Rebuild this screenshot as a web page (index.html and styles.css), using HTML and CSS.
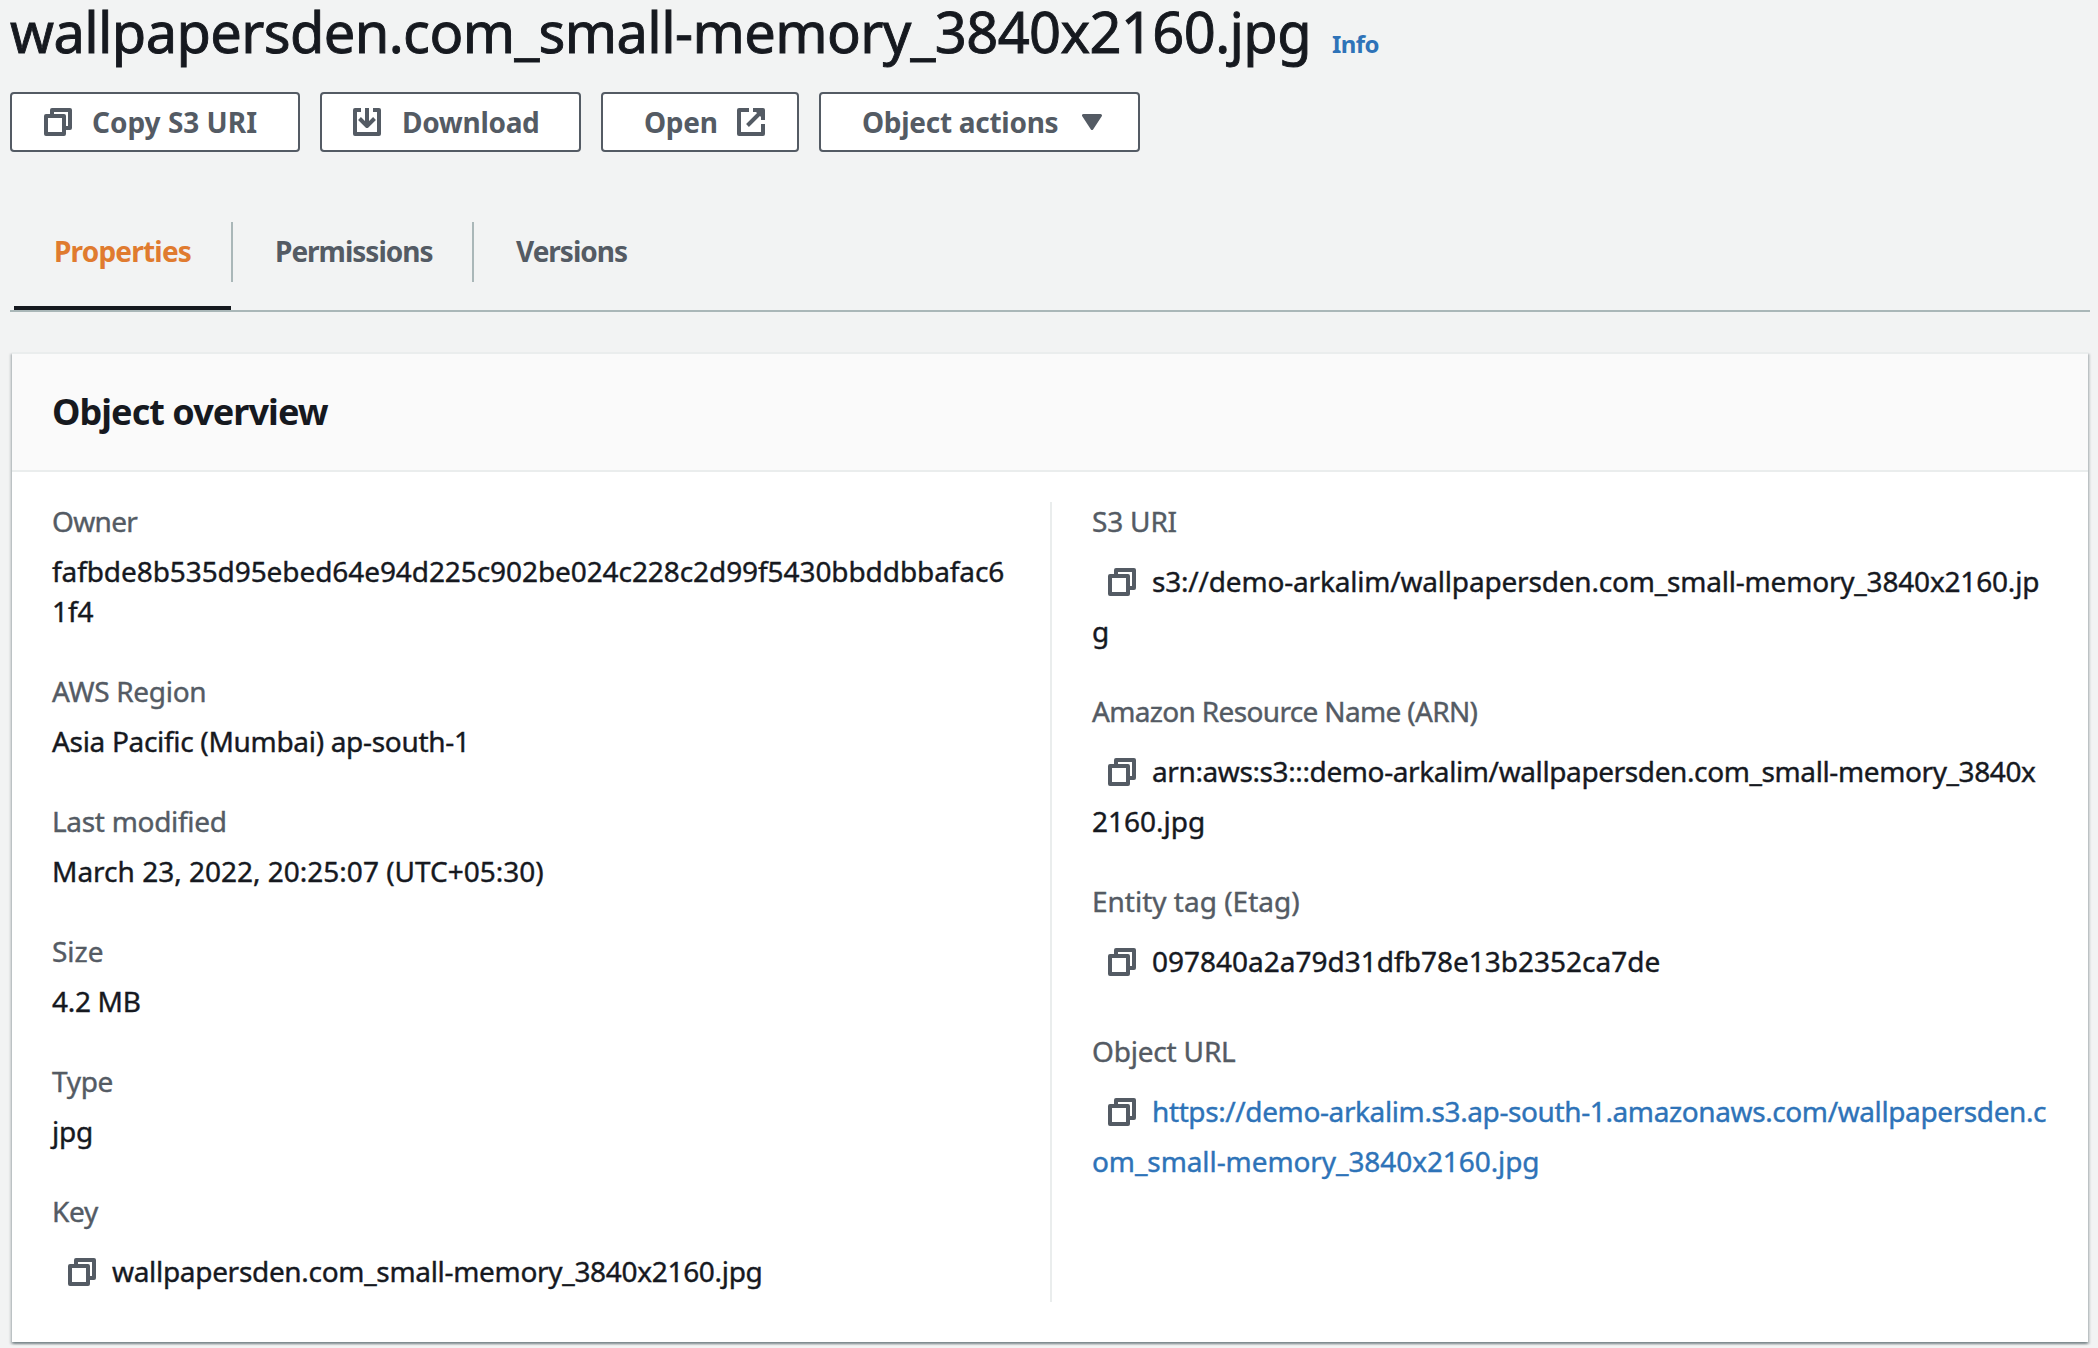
FILE: index.html
```
<!DOCTYPE html>
<html lang="en">
<head>
<meta charset="utf-8">
<title>wallpapersden.com_small-memory_3840x2160.jpg</title>
<link rel="stylesheet" href="styles.css">
</head>
<body>
<svg class="sprite" aria-hidden="true">
  <symbol id="copy" viewBox="0 0 28 28"><path d="M2 8h18v18H2z" /><path d="M8 6V2h18v18h-4" /></symbol>
  <symbol id="download" viewBox="0 0 28 28"><path d="M8 2H2v24h24V2h-6M14 0v17M6.500 10.500l7.500 7.500 7.500-7.500" /></symbol>
  <symbol id="external" viewBox="0 0 28 28"><path d="M12 2H2v24h24V16M16 2h10v10M25 3L10.500 17.500" /><path class="solid" d="M18 3h7v7z" /></symbol>
</svg>
<main class="page">
  <header class="title-row">
    <h1 class="title">wallpapersden.com_small-memory_3840x2160.jpg</h1>
    <a class="info">Info</a>
  </header>
  <div class="actions">
    <button class="btn btn-copy"><svg class="icon"><use href="#copy"/></svg>Copy S3 URI</button>
    <button class="btn btn-download"><svg class="icon"><use href="#download"/></svg>Download</button>
    <button class="btn btn-open">Open<svg class="icon"><use href="#external"/></svg></button>
    <button class="btn btn-menu">Object actions<svg class="caret" viewBox="0 0 20 16"><path d="M1.500 1.500h17L10 14.500z"/></svg></button>
  </div>
  <nav class="tabs">
    <a class="tab tab-active">Properties</a>
    <a class="tab tab-permissions">Permissions</a>
    <a class="tab tab-versions">Versions</a>
  </nav>
  <section class="card">
    <header class="card-header"><h2>Object overview</h2></header>
    <div class="columns">
      <dl class="column">
        <dt class="tightest">Owner</dt>
        <dd class="hash">fafbde8b535d95ebed64e94d225c902be024c228c2d99f5430bbddbbafac6<br>1f4</dd>
        <dt class="tight">AWS Region</dt>
        <dd class="tight">Asia Pacific (Mumbai) ap-south-1</dd>
        <dt class="tight">Last modified</dt>
        <dd>March 23, 2022, 20:25:07 (UTC+05:30)</dd>
        <dt>Size</dt>
        <dd class="tight">4.2 MB</dd>
        <dt class="tight">Type</dt>
        <dd class="snug">jpg</dd>
        <dt class="tight">Key</dt>
        <dd class="tight"><span class="copy"><svg class="icon"><use href="#copy"/></svg></span>wallpapersden.com_small-memory_3840x2160.jpg</dd>
      </dl>
      <dl class="column">
        <dt class="snug">S3 URI</dt>
        <dd class="snug"><span class="copy"><svg class="icon"><use href="#copy"/></svg></span>s3://demo-arkalim/wallpapersden.com_small-memory_3840x2160.jp<br>g</dd>
        <dt class="tightest">Amazon Resource Name (ARN)</dt>
        <dd><span class="copy"><svg class="icon"><use href="#copy"/></svg></span><span class="tighter">arn:aws:s3:::demo-arkalim/wallpapersden.com_small-memory_3840x</span><br>2160.jpg</dd>
        <dt>Entity tag (Etag)</dt>
        <dd><span class="copy"><svg class="icon"><use href="#copy"/></svg></span>097840a2a79d31dfb78e13b2352ca7de</dd>
        <dt class="snug">Object URL</dt>
        <dd class="link hash"><span class="copy"><svg class="icon"><use href="#copy"/></svg></span><span class="tighter">https://demo-arkalim.s3.ap-south-1.amazonaws.com/wallpapersden.c</span><br>om_small-memory_3840x2160.jpg</dd>
      </dl>
    </div>
  </section>
</main>
</body>
</html>
```
FILE: styles.css
```
* { box-sizing: border-box; }
body {
  margin: 0;
  background: #f2f3f3;
  color: #16191f;
  font: 400 28px/40px "Noto Sans", "Open Sans", sans-serif;
  -webkit-text-stroke: 0.4px currentColor;
}
.sprite { position: absolute; width: 0; height: 0; }
.page { width: 2098px; height: 1348px; padding: 0 8px 0 10px; overflow: hidden; }

/* Title */
.title-row { display: flex; align-items: baseline; height: 60px; white-space: nowrap; }
.title { margin: 0; width: 1322px; font-size: 56px; font-weight: 400; line-height: 62px; letter-spacing: -0.62px; -webkit-text-stroke-width: 0.9px; }
.info { color: #2e73b8; font-size: 24px; font-weight: 700; letter-spacing: -0.6px; -webkit-text-stroke-width: 0; }

/* Action buttons */
.actions { display: flex; gap: 20px; margin-top: 32px; }
.btn {
  display: flex; align-items: center; height: 60px; padding: 0; white-space: nowrap;
  border: 2px solid #545b64; border-radius: 4px; background: #fff; color: #545b64;
  font: inherit; font-weight: 700; -webkit-text-stroke-width: 0;
}
.btn-copy { width: 290px; padding-left: 32px; }
.btn-download { width: 261px; padding-left: 31px; letter-spacing: -0.3px; }
.btn-copy .icon { margin-right: 20px; }
.btn-download .icon { margin-right: 21px; }
.btn-open { width: 198px; padding: 0 32px 0 41px; justify-content: space-between; letter-spacing: -0.3px; }
.btn-menu { width: 321px; padding: 0 36px 0 41px; justify-content: space-between; letter-spacing: -0.28px; }
.icon { flex: none; width: 28px; height: 28px; fill: none; stroke: #545b64; stroke-width: 4; stroke-linejoin: round; }
.solid { fill: #545b64; stroke: none; }
.caret { width: 20px; height: 16px; fill: #545b64; stroke: #545b64; stroke-width: 3; stroke-linejoin: round; }

/* Tabs */
.tabs {
  display: flex; height: 90px; margin-top: 70px; border-bottom: 2px solid #aab7b8;
  color: #545b64; font-weight: 700; white-space: nowrap; -webkit-text-stroke-width: 0;
}
.tab { height: 60px; padding: 9px 0 0 42px; border-left: 2px solid #aab7b8; letter-spacing: -1px; }
.tab-active {
  width: 217px; height: 88px; margin-left: 4px; padding-left: 40px;
  border-left: 0; border-bottom: 4px solid #16191f; color: #e07b2f; letter-spacing: -0.8px;
}
.tab-permissions { width: 241px; }

/* Overview card */
.card {
  width: 2076px; height: 990px; margin: 40px 0 0 2px; background: #fff; border-top: 2px solid #eaeded;
  box-shadow: 0 2px 2px rgba(0,28,36,.3), 2px 2px 2px rgba(0,28,36,.15), -2px 2px 2px rgba(0,28,36,.15);
}
.card-header { height: 118px; padding: 38px 40px 0; background: #fafafa; border-bottom: 2px solid #eaeded; -webkit-text-stroke-width: 0; }
.card-header h2 { margin: 0; font-size: 36px; font-weight: 700; line-height: 40px; letter-spacing: -0.95px; }
.columns { display: grid; grid-template: 800px / 1038px 1fr; margin-top: 30px; white-space: nowrap; }
.column { margin: 0; padding-left: 40px; }
.column + .column { border-left: 2px solid #eaeded; }
dt { height: 50px; color: #545b64; }
dt:first-child { margin-top: -1px; }
dd { margin: 0 0 40px; }
.copy { display: inline-flex; align-items: center; justify-content: center; width: 60px; height: 60px; padding-top: 2px; vertical-align: -4px; letter-spacing: 0; }
.link { color: #2e73b8; }

/* Tracking */
.hash { letter-spacing: -0.08px; }
.snug { letter-spacing: -0.19px; }
.tight { letter-spacing: -0.31px; }
.tighter { letter-spacing: -0.39px; }
.tightest { letter-spacing: -0.66px; }
```
